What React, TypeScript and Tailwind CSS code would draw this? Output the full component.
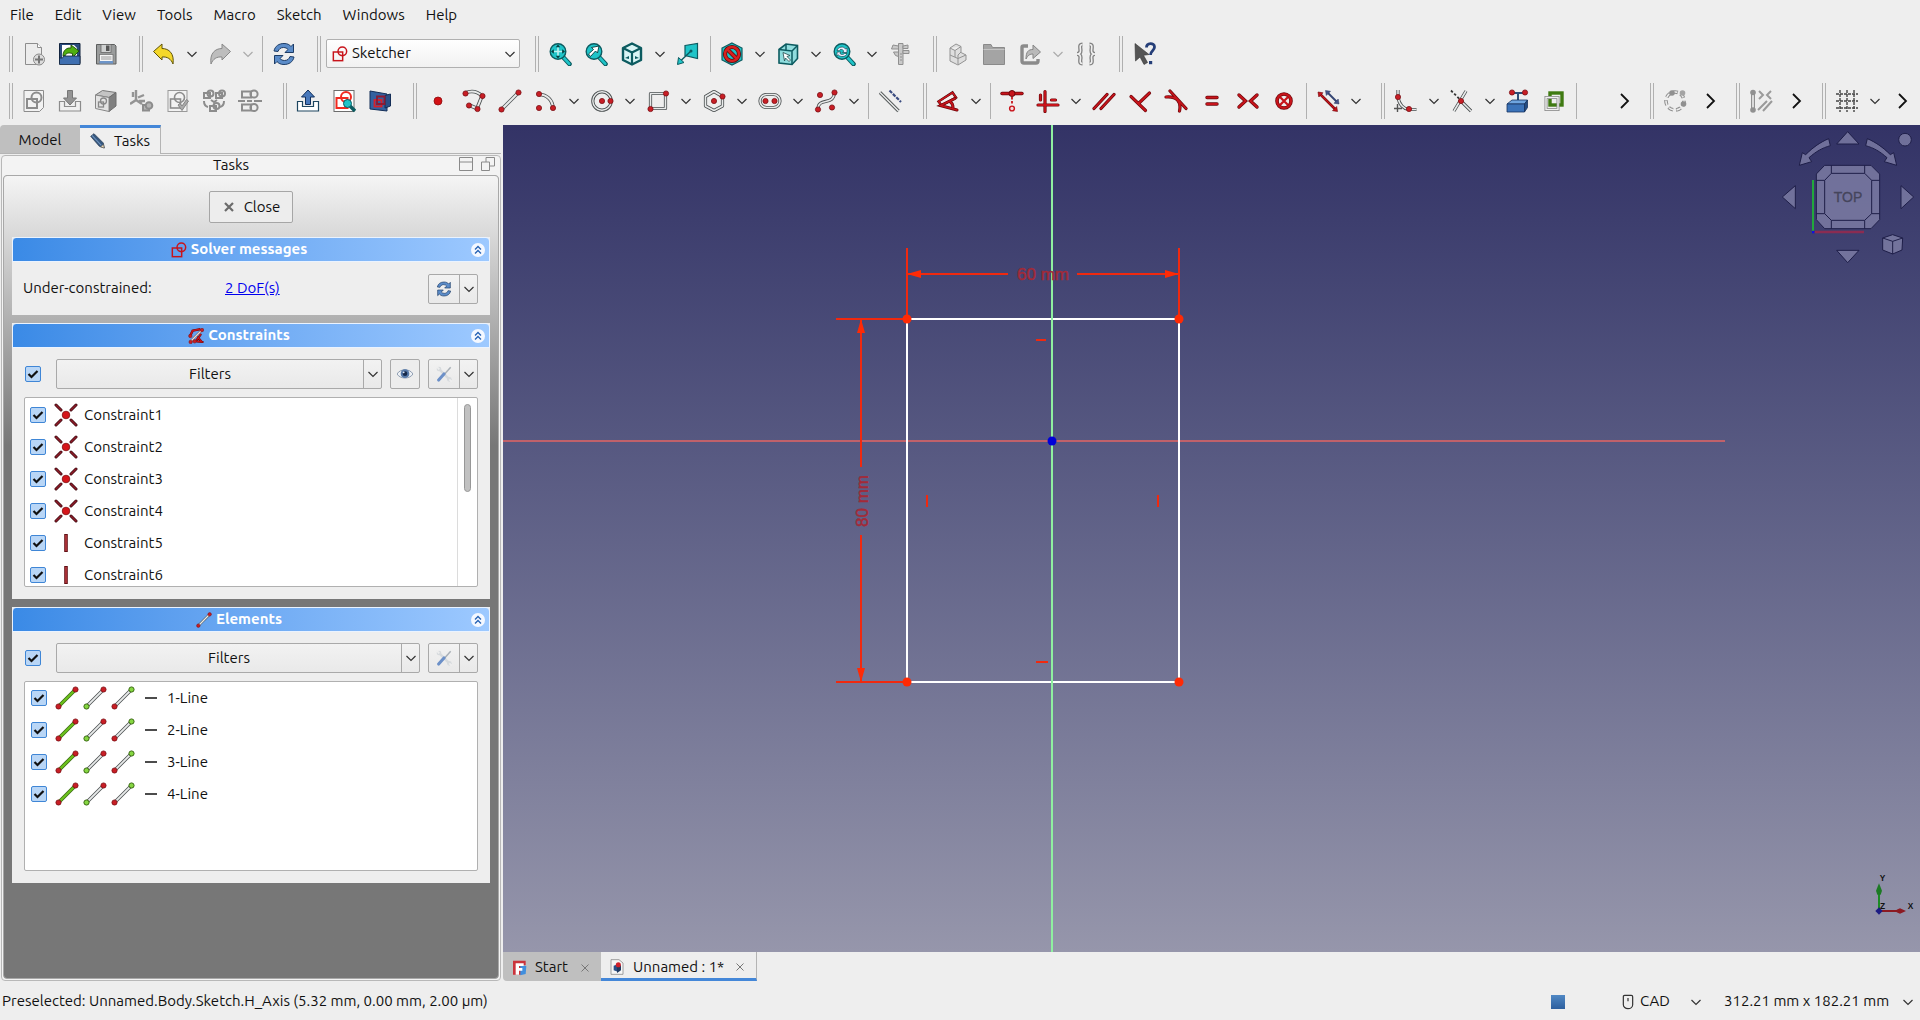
import { Fragment, useState } from 'react'
import type { ReactNode } from 'react'

const RED = '#c8141b'
const EDGE = '#3d0507'
const TEAL = '#1fc4c8'
const DTEAL = '#0c5b60'

function Tube({ d, c = '#e8eaea', o = '#4a4f50', w = 2 }: { d: string; c?: string; o?: string; w?: number }) {
  return (
    <g fill="none" strokeLinejoin="round">
      <path d={d} stroke={o} strokeWidth={w + 1.6} />
      <path d={d} stroke={c} strokeWidth={w} />
    </g>
  )
}

function Bar({ d, w = 2 }: { d: string; w?: number }) {
  return (
    <g fill="none" strokeLinecap="round">
      <path d={d} stroke="#6d070b" strokeWidth={w + 1} />
      <path d={d} stroke={RED} strokeWidth={w - 0.4} />
    </g>
  )
}

function Dot({ x, y, r = 2.6, c = '#c81e25' }: { x: number; y: number; r?: number; c?: string }) {
  return <circle cx={x} cy={y} r={r} fill={c} stroke="#7b1216" strokeWidth="0.8" />
}

function Lens({ children }: { children?: ReactNode }) {
  return (
    <>
      <path d="M15 15l6.5 7" stroke={DTEAL} strokeWidth="4.6" strokeLinecap="round" />
      <path d="M15.5 15.500l5.800 6.300" stroke={TEAL} strokeWidth="2.6" strokeLinecap="round" />
      <circle cx="10" cy="9.500" r="7.800" fill={TEAL} stroke={DTEAL} strokeWidth="1.4" />
      {children}
    </>
  )
}

const sketchShape = (
  <g fill="none" stroke={RED} strokeWidth="2.2">
    <rect x="2" y="9" width="14" height="13" />
    <circle cx="15.500" cy="8" r="6.500" />
  </g>
)

const refreshShape = (
  <g fill="#5b8cc9" stroke="#1d3c66" strokeWidth="1" strokeLinejoin="round">
    <path d="M2 9c1-5 5-7.500 10-7.500 3.500 0 5.500 1.200 7 3L21.500 2v8.500H13l3-3c-1-1.200-2.500-2-4.500-2-3 0-4.500 1.500-5.500 4z" />
    <path d="M22 15c-1 5-5 7.500-10 7.500-3.500 0-5.500-1.200-7-3L2.500 22v-8.500H11l-3 3c1 1.200 2.500 2 4.500 2 3 0 4.500-1.500 5.500-4z" />
  </g>
)

const icons: Record<string, ReactNode> = {
  newDoc: (
    <>
      <path d="M3.500 1.500h12l4 4v17h-16z" fill="#ececec" stroke="#8d8d8d" />
      <path d="M15.500 1.500v4h4" fill="#fff" stroke="#8d8d8d" />
      <circle cx="17" cy="17.500" r="5.500" fill="#dcdcdc" stroke="#8a8a8a" />
      <path d="M17 13.500v8M13 17.500h8" stroke="#777" strokeWidth="2" />
    </>
  ),
  open: (
    <>
      <path d="M1.500 1.500H22v20H1.500z" fill="#2a4b7c" stroke="#12243f" />
      <path d="M4 3h12l3 3v10H4z" fill="#fff" />
      <path d="M5 14c0-6 4-8.500 8-8l0-3 8 6-6.500 6.500v-4C10 10.500 8 11 7 14z" fill="#4fae10" stroke="#1c4d04" strokeWidth="0.9" />
      <path d="M1.500 16h3l1-2H22v8.500H1.500z" fill="#3f6fb0" stroke="#12243f" strokeWidth="0.8" />
    </>
  ),
  save: (
    <>
      <path d="M2.500 2.500h18l1.500 1.500v18h-19.500z" fill="#9a9c9c" stroke="#5c5e5e" />
      <rect x="7" y="2.500" width="10" height="8" fill="#cfd1d1" stroke="#666" strokeWidth="0.8" />
      <rect x="12" y="3.500" width="3.500" height="5.500" fill="#555" />
      <rect x="5.500" y="12.500" width="13.500" height="9" fill="#f5f5f5" stroke="#777" strokeWidth="0.8" />
      <path d="M7 15h10.500M7 17h10.500" stroke="#999" />
      <path d="M5.500 19h13.500v2.500H5.500z" fill="#6d95c9" />
    </>
  ),
  undo: <path d="M1.500 9.500L10 2v4.500c7 0 12.500 5 11 15.500-2-5-5.500-7.500-11-7V18z" fill="#f4d72a" stroke="#5f5306" strokeLinejoin="round" />,
  redo: <path d="M22.500 9.500L14 2v4.500C7 6.500 1.500 11.500 3 22c2-5 5.500-7.500 11-7V18z" fill="#bdbdbd" stroke="#888" strokeLinejoin="round" />,
  refresh: refreshShape,
  sketcher: sketchShape,
  fitAll: (
    <Lens>
      <path d="M10 2.500l2.200 2.800H7.800zM10 16.500l2.200-2.800H7.800zM3 9.500l2.800-2.200v4.400zM17 9.500l-2.800-2.200v4.400z" fill="#073b3e" />
      <path d="M10 5.500v8M6 9.500h8" stroke="#bff0f0" strokeWidth="1.600" />
    </Lens>
  ),
  fitSelection: (
    <Lens>
      <path d="M6.500 14.500L4.500 12l5-4.500-2-2L15 4l-1.500 7-2-2z" fill="#fff" stroke="#073b3e" strokeWidth="0.9" />
    </Lens>
  ),
  isometric: (
    <>
      <path d="M12 1.500l9 4.500v12l-9 4.500L3 18V6z" fill="#d9f5f5" stroke={DTEAL} strokeWidth="2.400" strokeLinejoin="round" />
      <path d="M3 6l9 4.500L21 6M12 10.500v12" fill="none" stroke={DTEAL} strokeWidth="2.200" />
      <path d="M5 16l4-2v3zM19 16l-4-2v3z" fill={DTEAL} />
    </>
  ),
  viewPlane: (
    <>
      <path d="M9 3.500l12.500-2v15L9 13.500z" fill={TEAL} stroke={DTEAL} strokeWidth="1.200" />
      <path d="M15 9L5 18.500" stroke={DTEAL} strokeWidth="1.400" />
      <path d="M1.500 22.500l1-7 5.500 5z" fill={TEAL} stroke={DTEAL} />
      <circle cx="15" cy="9" r="1.500" fill={DTEAL} />
    </>
  ),
  drawStyle: (
    <>
      <path d="M12 1l10 5v12l-10 5L2 18V6z" fill={TEAL} stroke={DTEAL} strokeWidth="1.200" />
      <circle cx="12" cy="12" r="7" fill="none" stroke="#5a0a0c" strokeWidth="4.200" />
      <path d="M7.500 7.500l9 9" stroke="#5a0a0c" strokeWidth="4.200" />
      <circle cx="12" cy="12" r="7" fill="none" stroke="#d8201f" strokeWidth="2.600" />
      <path d="M7 7l10 10" stroke="#d8201f" strokeWidth="2.600" />
    </>
  ),
  selectionBox: (
    <>
      <path d="M3 7.500L10 2l11.500 1.500v13L16 22.500 3 21z" fill="#8fdcdd" stroke={DTEAL} strokeWidth="1.600" />
      <path d="M3 7.500l13 1.500 5.500-5.500M16 9v13.500M10 2v6" fill="none" stroke={DTEAL} strokeWidth="1.500" />
      <path d="M7 10.500l7 3-3 1 3.500 3.500-1.500 1.500-3.500-3.500-1 3z" fill="#fff" stroke="#21474a" strokeWidth="0.800" />
    </>
  ),
  syncView: (
    <Lens>
      <path d="M5 8.500c1-4 7-4.500 8.500-1.500l1.500-1v4.500h-4.500l1.300-1.500C10.500 7 8 7 7 8.800zM15 11.500c-1 3.500-6.500 4-8.500 1.500L5 14v-4h4l-1 1.500c1.500 1.500 3.500 1 4.500 0z" fill="#eef" stroke="#16484b" strokeWidth="0.700" />
    </Lens>
  ),
  measure: (
    <g fill="#c9c9c9" stroke="#8f8f8f">
      <path d="M10.500 1.500h4.500v21h-4.500z" />
      <path d="M5 3l5.500 1v3H3.500zM15 4l5-1v3.500h-5zM5.500 10h5v4.500l-3-1zM15 8.500h6v3h-6z" />
      <path d="M12 12h2M12 15h2M12 18h2" />
    </g>
  ),
  part: (
    <g fill="#dedede" stroke="#929292" strokeLinejoin="round">
      <path d="M4 13l8-4 8 4v5l-8 5-8-4z" />
      <path d="M4 13V6l6-4 5 2.500v5.500l-3 3v10M4 13l8 3.500 8-3.500M4 6l5 2.500L15 4.500M9 8.500V15" />
    </g>
  ),
  folder: (
    <>
      <path d="M1.500 2.500H9l1.500 3h12v17h-21z" fill="#a4a4a4" stroke="#8a8a8a" />
      <path d="M1.500 7.500h21" stroke="#c4c4c4" />
    </>
  ),
  exportLink: (
    <>
      <path d="M10 4H5.500Q4 4 4 5.500V19q0 2 2 2h12q2 0 2-2v-2" fill="none" stroke="#8b8b8b" strokeWidth="3.400" />
      <path d="M8 17c0-7 2-9.500 7-9.500V3l7.500 7-7.500 6.500V12c-3 0-5 1-7 5z" fill="#b9b9b9" stroke="#858585" />
    </>
  ),
  varSet: (
    <g fill="none">
      <path d="M8.500 2.500C5 2.500 6.500 6 6.500 8.500S5.500 12 3 12c2.500 0 3.500 1 3.500 3.500s-1.500 6 2 6M15.500 2.500c3.500 0 2 3.500 2 6s1 3.500 3.500 3.500c-2.500 0-3.500 1-3.500 3.500s1.500 6-2 6" stroke="#828282" strokeWidth="4.200" />
      <path d="M8.500 2.500C5 2.500 6.500 6 6.500 8.500S5.500 12 3 12c2.500 0 3.500 1 3.500 3.500s-1.500 6 2 6M15.500 2.500c3.500 0 2 3.500 2 6s1 3.500 3.500 3.500c-2.500 0-3.500 1-3.500 3.500s1.500 6-2 6" stroke="#f0f0f0" strokeWidth="1.600" />
    </g>
  ),
  whatsThis: (
    <>
      <path d="M3 1.500l14 11-5.500.8 4 7.200-3.500 2-4-7.500L3.500 19z" fill="#555" stroke="#333" strokeWidth="0.600" />
      <path d="M14.500 5.500c0-5 8-5 8-.5 0 4-4 3.500-4 8" fill="none" stroke="#253e78" strokeWidth="2.800" />
      <rect x="17" y="19" width="3.200" height="3.200" fill="#253e78" />
    </>
  ),
  newSketch: (
    <>
      <path d="M2 1.500h19.500v17l-4 4H2z" fill="#f2f2f2" stroke="#8c8c8c" />
      <rect x="5" y="10" width="10" height="9" fill="none" stroke="#8c8c8c" strokeWidth="2" />
      <circle cx="14.500" cy="8.500" r="5" fill="none" stroke="#8c8c8c" strokeWidth="2" />
    </>
  ),
  attach: (
    <>
      <path d="M1.500 12.500h5v5h11v-5h5v9.500h-21z" fill="#f0f0f0" stroke="#8c8c8c" strokeWidth="1.200" />
      <path d="M9.500 1.500h5V9h4L12 16 5.500 9h4z" fill="#949494" stroke="#777" />
    </>
  ),
  box: (
    <>
      <path d="M1.500 6l7-4.500L22 3.500 15 8.500z" fill="#c4c4c4" stroke="#777" />
      <path d="M15 8.500l7-5V17l-7 5.500z" fill="#808080" stroke="#6d6d6d" />
      <path d="M1.500 6L15 8.500v14l-13.500-3z" fill="#e3e3e3" stroke="#888" />
      <rect x="4.500" y="13" width="5" height="5" fill="none" stroke="#888" strokeWidth="1.300" />
      <circle cx="9.500" cy="12" r="3" fill="none" stroke="#888" strokeWidth="1.300" />
    </>
  ),
  reorient: (
    <>
      <path d="M6 1v10L0 15M6 11l6 4M8 8.500l6-2.500M9 12l6 0M3 3v5" fill="none" stroke="#949494" strokeWidth="2.400" />
      <rect x="13" y="16" width="6" height="5.500" fill="#b5b5b5" stroke="#8c8c8c" strokeWidth="2" />
      <circle cx="19" cy="16.500" r="3.300" fill="#b5b5b5" stroke="#8c8c8c" strokeWidth="2" />
    </>
  ),
  validate: (
    <>
      <rect x="2" y="1.500" width="19" height="21" fill="#f2f2f2" stroke="#999" />
      <circle cx="13.500" cy="8.500" r="5" fill="none" stroke="#8c8c8c" strokeWidth="1.600" />
      <rect x="4.500" y="10" width="10" height="9" fill="none" stroke="#8c8c8c" strokeWidth="1.600" />
      <path d="M12 16l4 5.500L22.500 12l-2-1.500-4.500 6.500-2-2.500z" fill="#aaa" stroke="#858585" />
    </>
  ),
  merge: (
    <g fill="none" stroke="#8c8c8c" strokeWidth="2">
      <rect x="2" y="4" width="6" height="5" /><circle cx="8.500" cy="4.500" r="3" />
      <rect x="14" y="4" width="6" height="5" /><circle cx="20" cy="4.500" r="3" />
      <rect x="8" y="17" width="6" height="5" /><circle cx="14.500" cy="17" r="3" />
      <path d="M2 12q0 5 4 6M22 12q0 5-4 6M9 11l3 2 3-2" />
    </g>
  ),
  mirror: (
    <g fill="none" stroke="#8c8c8c" strokeWidth="2">
      <path d="M0 12h7M9 12h5M16 12h8" />
      <rect x="4" y="2.500" width="9" height="6" /><circle cx="16" cy="5" r="3.600" />
      <rect x="4" y="15.500" width="9" height="6" /><circle cx="16" cy="18.500" r="3.600" />
    </g>
  ),
  leave: (
    <>
      <path d="M1.500 12.500h5v5h11v-5h5v9.500h-21z" fill="#fff" stroke="#1e4660" strokeWidth="1.200" />
      <path d="M9.500 15.500h5V8h4L12 1 5.500 8h4z" fill="#4878bb" stroke="#12305c" />
    </>
  ),
  viewSketch: (
    <>
      <rect x="2" y="1.500" width="20" height="21" fill="#fff" stroke="#6c6c6c" />
      <g fill="none" stroke="#f02a20" strokeWidth="2"><circle cx="14" cy="8" r="5" /><rect x="4.500" y="9" width="11" height="10" /></g>
      <path d="M18 17l5 5" stroke="#0c5b60" strokeWidth="3.600" />
      <circle cx="15.500" cy="14.500" r="4" fill={TEAL} stroke={DTEAL} />
    </>
  ),
  viewSection: (
    <>
      <path d="M2 2l17 3v17L2 20z" fill="#34619f" stroke="#142e57" />
      <path d="M17 6.500l5.500-1.500v12L17 19z" fill="#2a4f86" stroke="#142e57" />
      <rect x="6.500" y="11" width="7" height="6.500" fill="none" stroke="#d8202a" strokeWidth="1.800" />
      <path d="M9 7.500h7.500v7.500H9z" fill="none" stroke="#8d1a33" strokeWidth="1.800" />
    </>
  ),
  point: <circle cx="12" cy="12" r="4" fill="#d31014" stroke="#8d0c0f" strokeWidth="0.800" />,
  polyline: (
    <>
      <Tube d="M3 4c6-2.500 12-2 17 3l-5 12.500-8-3.500" />
      <Dot x={3.500} y={4.500} /><Dot x={20.500} y={7} /><Dot x={15.500} y={20} /><Dot x={7} y={16.500} />
    </>
  ),
  line: <><Tube d="M3.500 20.500L20.500 3.500" /><Dot x={3.500} y={20.500} /><Dot x={20.500} y={3.500} /></>,
  arc: <><Tube d="M5 5.500C13 5.500 18.500 11 19 19" /><Dot x={5} y={5} /><Dot x={5} y={19} /><Dot x={19} y={19} /></>,
  circle: (
    <>
      <circle cx="12" cy="12" r="9.200" fill="none" stroke="#4a4f50" strokeWidth="3.200" />
      <circle cx="12" cy="12" r="9.200" fill="none" stroke="#e8eaea" strokeWidth="1.400" />
      <Dot x={12} y={12} /><Dot x={20.500} y={12} />
    </>
  ),
  rect: <><Tube d="M4.500 4.500h15v15h-15z" w={1.600} /><Dot x={20} y={4.500} /><Dot x={4.500} y={20} /></>,
  hexagon: <><Tube d="M12 2.500l8.500 5v9.500L12 21.500 3.500 17V7.500z" w={1.600} /><Dot x={12} y={12} /><Dot x={20.500} y={7.500} /></>,
  slot: <><Tube d="M8.500 5.500h7a6.500 6.500 0 0 1 0 13h-7a6.500 6.500 0 0 1 0-13z" w={1.600} /><Dot x={7.500} y={12} /><Dot x={16.500} y={12} /></>,
  spline: <><Tube d="M4 20C4 8 19.500 17 20.500 4" w={1.600} /><Dot x={4} y={20.500} /><Dot x={20.500} y={3.500} /><Dot x={6} y={6} /><Dot x={18} y={18.500} /></>,
  construction: (
    <>
      <Tube d="M2 3.500l18.500 18.500" w={1.600} />
      <path d="M11.500 1.500l11.500 11.500" stroke="#3a4c80" strokeWidth="2.200" strokeDasharray="3.600 1.200" />
    </>
  ),
  dimension: (
    <>
      <path d="M2.500 12.500L16.500 3.500l3.500 5L5.500 16.500z" fill="#f6eeee" stroke={EDGE} strokeWidth="2.400" />
      <path d="M2.500 12.500L16.500 3.500l3.500 5L5.500 16.500z" fill="none" stroke={RED} strokeWidth="1.600" />
      <Bar d="M21 21L4.500 16.500 19 9.500M14.500 13c2 1.500 2.500 3 2.500 5.500" w={2} />
    </>
  ),
  coincident: (
    <>
      <Bar d="M2 4.500h20" w={2.400} />
      <circle cx="12" cy="4.500" r="3" fill={RED} stroke="#6d070b" />
      <path d="M12 8v8" stroke={RED} strokeWidth="1.800" strokeDasharray="2.500 1.500" />
      <circle cx="12" cy="19.500" r="2.400" fill="#f5dcdc" stroke={RED} strokeWidth="1.400" />
    </>
  ),
  horVert: <Bar d="M2 16h20M9 2.500v20M4.500 6v5M15.500 11h4" w={2.200} />,
  parallel: <Bar d="M2 19.500L15 5.500M9 19.500L22 5.500" w={2.200} />,
  perpendicular: <Bar d="M21.500 4L10.500 14.500M3 7.500l14.500 14" w={2.200} />,
  tangent: <Bar d="M6 2l16 17.500M2 8c11-1 15.500 5 13.500 14" w={2.200} />,
  equal: <Bar d="M7 8.500h10M7 15h10" w={2.400} />,
  symmetric: <Bar d="M3 6l6.500 6L3 18M21 6l-6.500 6 6.500 6" w={2.400} />,
  block: (
    <>
      <circle cx="12" cy="12" r="7" fill="none" stroke="#6d070b" strokeWidth="3.600" />
      <circle cx="12" cy="12" r="7" fill="none" stroke={RED} strokeWidth="2.200" />
      <path d="M8 8l8 8M16 8l-8 8" stroke={RED} strokeWidth="2.200" />
    </>
  ),
  toggleDriving: (
    <>
      <Bar d="M4 5l15.500 15.500" w={1.600} />
      <path d="M2 3l5 .8-4.200 4.200zM21.500 22.500l-5-.8 4.200-4.200z" fill={RED} stroke="#6d070b" strokeWidth="0.600" />
      <path d="M11.500 3.500l9.500 9.500" stroke="#354573" strokeWidth="2" />
      <path d="M9.500 1.500l5 .8-4.200 4.200zM23 15l-5-.8 4.200-4.200z" fill="#46568a" stroke="#2a375f" strokeWidth="0.500" />
    </>
  ),
  fillet: (
    <>
      <Tube d="M4 1v7c1 8 6 12 11 12.500h7.500" w={1.600} />
      <path d="M3.500 15v8M0 19.500h8" stroke="#555" strokeWidth="1.400" />
      <Dot x={4} y={8} /><Dot x={15} y={20} />
    </>
  ),
  trim: (
    <>
      <Tube d="M16 2L4 22M11 12l10 10" w={1.600} />
      <path d="M1 1.500l9 9" stroke="#333" strokeWidth="1.800" strokeDasharray="2.500 2" />
      <Dot x={11} y={12} />
    </>
  ),
  external: (
    <>
      <path d="M5 4h14" stroke="#2d4e77" strokeWidth="2" />
      <path d="M12 4v8" stroke="#2d4e77" strokeWidth="2" />
      <path d="M1 15l5-4h15.500l-3 4z" fill="#6fa6e0" stroke="#16345f" strokeWidth="0.800" />
      <path d="M1 15h17.500v8H1z" fill="#3b73b9" stroke="#16345f" strokeWidth="0.800" />
      <path d="M18.500 15l3-4v7.500l-3 4.500z" fill="#234c82" stroke="#16345f" strokeWidth="0.800" />
      <Dot x={6} y={3.500} /><Dot x={19} y={3.500} />
    </>
  ),
  carbonCopy: (
    <>
      <rect x="8" y="4" width="12" height="12" fill="none" stroke="#3f7a12" strokeWidth="3.400" />
      <rect x="4" y="8.500" width="12" height="12" fill="none" stroke="#888" strokeWidth="3" />
      <rect x="4" y="8.500" width="12" height="12" fill="none" stroke="#f0f0f0" strokeWidth="1.400" />
    </>
  ),
  bspline: (
    <>
      <circle cx="12" cy="12" r="9" fill="none" stroke="#8c8c8c" strokeWidth="3.600" strokeDasharray="5 3" />
      <circle cx="12" cy="12" r="9" fill="none" stroke="#eee" strokeWidth="1.600" strokeDasharray="4.500 3.500" />
      <circle cx="9" cy="4" r="2.800" fill="#909090" /><circle cx="19.500" cy="4" r="2.800" fill="#a4a4a4" /><circle cx="20.500" cy="15" r="2.800" fill="#909090" />
    </>
  ),
  visual: (
    <>
      <path d="M4 4v17" stroke="#909090" strokeWidth="4" /><path d="M4 4v17" stroke="#eee" strokeWidth="1.600" />
      <circle cx="4" cy="3.500" r="2.800" fill="#909090" /><circle cx="4" cy="21" r="2.800" fill="#909090" />
      <path d="M10 2l4 4-4 4M22 2l-4 4 4 4M9 21l9-9M14 22l9-10" fill="none" stroke="#9a9a9a" strokeWidth="2" />
    </>
  ),
  grid: <path d="M1 5h22M1 12h22M1 19h22M5 1v22M12 1v22M19 1v22" stroke="#444" strokeWidth="1.400" strokeDasharray="3 1" />,
  constraints: (
    <>
      <Bar d="M7 4L17 2M4 10l3-6" w={2.600} />
      <Tube d="M3 21L21 3" c="#f3d5d5" />
      <Bar d="M13 20l9 1M19 10l-6 8M15 14l5 6" w={2.200} />
      <Dot x={4} y={21} /><Dot x={21} y={3} /><Dot x={3.500} y={12} /><Dot x={10} y={20} />
    </>
  ),
  coincidentPoint: (
    <>
      <path d="M2 2l5 5M22 2l-5 5M2 22l5-5M22 22l-5-5" stroke="#3c0a10" strokeWidth="3" strokeLinecap="round" />
      <path d="M2 2l5 5M22 2l-5 5M2 22l5-5M22 22l-5-5" stroke="#8e1c28" strokeWidth="1.600" strokeLinecap="round" />
      <circle cx="12" cy="12" r="3.800" fill="#d5151a" stroke="#7d1013" strokeWidth="0.800" />
    </>
  ),
  vertical: (
    <>
      <path d="M12 3v18" stroke="#611015" strokeWidth="3.600" />
      <path d="M12 4v16" stroke="#b0353a" strokeWidth="1.800" />
    </>
  ),
  edge: <><Tube d="M3.500 20.500L20.500 3.500" c="#6cc31c" o="#3c6a14" w={2.200} /><Dot x={3.500} y={20.500} /><Dot x={20.500} y={3.500} /></>,
  startPoint: <><Tube d="M3.500 20.500L20.500 3.500" w={1.800} /><circle cx="3.500" cy="20.500" r="2.600" fill="#85d641" stroke="#3c6a14" /><Dot x={20.500} y={3.500} /></>,
  endPoint: <><Tube d="M3.500 20.500L20.500 3.500" w={1.800} /><Dot x={3.500} y={20.500} /><circle cx="20.500" cy="3.500" r="2.600" fill="#85d641" stroke="#3c6a14" /></>,
  eye: (
    <>
      <path d="M0 12C5 3.500 19 3.500 24 12 19 20 5 20 0 12z" fill="#eef1f5" stroke="#8494ab" strokeWidth="1.400" />
      <circle cx="12" cy="11.500" r="6.500" fill="#5578a8" /><circle cx="12" cy="11.500" r="3.500" fill="#16294a" /><circle cx="10" cy="9.500" r="1.400" fill="#dfe8f5" />
    </>
  ),
  tools: (
    <>
      <path d="M4 4l16 16" stroke="#d6dadd" strokeWidth="3.600" />
      <circle cx="4.500" cy="4.500" r="3.500" fill="#d6dadd" /><circle cx="20" cy="20" r="3.500" fill="#d6dadd" /><path d="M1 1l4 4M20 20l4 4" stroke="#eee" strokeWidth="2.600" />
      <path d="M22 2l-9 10" stroke="#a9b0b7" strokeWidth="2.200" />
      <path d="M12 12l-8 9" stroke="#6c90c8" strokeWidth="4.600" strokeLinecap="round" />
    </>
  ),
  pencil: (
    <>
      <path d="M1 5l5-4 14 14 1.500 7.500L14 20z" fill="#35577f" stroke="#1d3149" />
      <path d="M16 21l5.500 1.500L20 17z" fill="#ecd9b5" stroke="#333" strokeWidth="0.600" />
      <path d="M3 3.500l14 15" stroke="#6f93bd" strokeWidth="1.600" />
    </>
  ),
  freecad: (
    <>
      <path d="M3 1h19v7h-7v14H3z" fill="#cb333b" />
      <path d="M14 8l9 1-1 12-8 2z" fill="#418fde" />
      <path d="M7 5h12v4h-7v3h5v4h-5v6H7z" fill="#fff" />
    </>
  ),
  document: (
    <>
      <path d="M3 1h12l6 5v17H3z" fill="#f6f6f6" stroke="#777" />
      <path d="M7 10l6-2v11l-6-2z" fill="#294e86" /><path d="M12 12l6-3v8l-6 4z" fill="#20395f" /><circle cx="14" cy="8.500" r="3.800" fill="#d0202a" />
    </>
  ),
  mouse: <path d="M7 2h10q2 0 2 2v12a7 6 0 0 1-14 0V4q0-2 2-2zM12 6v5" fill="none" stroke="#333" strokeWidth="1.800" />,
}

function Icon({ name, size = 'size-6' }: { name: string; size?: string }) {
  return (
    <svg viewBox="0 0 24 24" fill="none" className={`${size} shrink-0`} aria-hidden="true">
      {icons[name]}
    </svg>
  )
}

function Chevron({ dim }: { dim?: boolean }) {
  return (
    <svg viewBox="0 0 12 12" className={`size-3 shrink-0 ${dim ? 'text-[#aaa]' : 'text-[#333]'}`} fill="none" aria-hidden="true">
      <path d="M1.500 4L6 8.500 10.500 4" stroke="currentColor" strokeWidth="1.200" />
    </svg>
  )
}

interface Tool {
  icon: string
  label: string
  menu?: boolean
  off?: boolean
}
type Item = Tool | 'sep' | 'handle' | 'ext' | 'fill'

const fileTools: Item[] = [
  'handle',
  { icon: 'newDoc', label: 'New' },
  { icon: 'open', label: 'Open' },
  { icon: 'save', label: 'Save' },
  'handle',
  { icon: 'undo', label: 'Undo', menu: true },
  { icon: 'redo', label: 'Redo', menu: true, off: true },
  'sep',
  { icon: 'refresh', label: 'Refresh' },
  'handle',
]

const viewTools: Item[] = [
  'handle',
  { icon: 'fitAll', label: 'Fit all' },
  { icon: 'fitSelection', label: 'Fit selection' },
  { icon: 'isometric', label: 'Isometric', menu: true },
  { icon: 'viewPlane', label: 'Align to selection' },
  'sep',
  { icon: 'drawStyle', label: 'Draw style', menu: true },
  { icon: 'selectionBox', label: 'Selection view', menu: true },
  { icon: 'syncView', label: 'Sync view', menu: true },
  { icon: 'measure', label: 'Measure', off: true },
  'handle',
  { icon: 'part', label: 'Create part', off: true },
  { icon: 'folder', label: 'Create group', off: true },
  { icon: 'exportLink', label: 'Make link', menu: true, off: true },
  { icon: 'varSet', label: 'Variable set', off: true },
  'handle',
  { icon: 'whatsThis', label: 'What is this?' },
]

const sketchTools: Item[] = [
  'handle',
  { icon: 'newSketch', label: 'New sketch', off: true },
  { icon: 'attach', label: 'Attach sketch', off: true },
  { icon: 'box', label: 'Edit sketch', off: true },
  { icon: 'reorient', label: 'Reorient sketch', off: true },
  { icon: 'validate', label: 'Validate sketch', off: true },
  { icon: 'merge', label: 'Merge sketches', off: true },
  { icon: 'mirror', label: 'Mirror sketch', off: true },
  'handle',
  { icon: 'leave', label: 'Leave sketch' },
  { icon: 'viewSketch', label: 'View sketch' },
  { icon: 'viewSection', label: 'View section' },
  'handle',
  { icon: 'point', label: 'Point' },
  { icon: 'polyline', label: 'Polyline' },
  { icon: 'line', label: 'Line' },
  { icon: 'arc', label: 'Arc', menu: true },
  { icon: 'circle', label: 'Circle', menu: true },
  { icon: 'rect', label: 'Rectangle', menu: true },
  { icon: 'hexagon', label: 'Polygon', menu: true },
  { icon: 'slot', label: 'Slot', menu: true },
  { icon: 'spline', label: 'B-spline', menu: true },
  'sep',
  { icon: 'construction', label: 'Construction geometry' },
  'handle',
  { icon: 'dimension', label: 'Dimension', menu: true },
  'sep',
  { icon: 'coincident', label: 'Coincident' },
  { icon: 'horVert', label: 'Horizontal/vertical', menu: true },
  { icon: 'parallel', label: 'Parallel' },
  { icon: 'perpendicular', label: 'Perpendicular' },
  { icon: 'tangent', label: 'Tangent' },
  { icon: 'equal', label: 'Equal' },
  { icon: 'symmetric', label: 'Symmetric' },
  { icon: 'block', label: 'Block' },
  'sep',
  { icon: 'toggleDriving', label: 'Toggle driving', menu: true },
  'handle',
  { icon: 'fillet', label: 'Fillet', menu: true },
  { icon: 'trim', label: 'Trim', menu: true },
  { icon: 'external', label: 'External geometry' },
  { icon: 'carbonCopy', label: 'Carbon copy' },
  'sep',
  'fill',
  'ext',
  'handle',
  { icon: 'bspline', label: 'B-spline tools', off: true },
  'ext',
  'handle',
  { icon: 'visual', label: 'Visual helpers', off: true },
  'ext',
  'handle',
  { icon: 'grid', label: 'Grid', menu: true },
  'ext',
]

function ToolItems({ items }: { items: Item[] }) {
  return (
    <>
      {items.map((item, i) => {
        if (item === 'handle') {
          return <span key={i} className="h-9 w-1 shrink-0 border-x border-[#b0b0b0] mr-[3px] ml-[15px] first:ml-[9px]" />
        }
        if (item === 'sep') {
          return <span key={i} className="h-9 w-px shrink-0 bg-[#b0b0b0] mr-[3px] ml-1" />
        }
        if (item === 'fill') return <span key={i} className="flex-1" />
        if (item === 'ext') {
          return (
            <button key={i} aria-label="More tools" className="flex w-7 shrink-0 items-center justify-end pr-1">
              <svg viewBox="0 0 12 18" className="h-[18px] w-3" fill="none">
                <path d="M2 2l7 7-7 7" stroke="#111" strokeWidth="1.800" />
              </svg>
            </button>
          )
        }
        return (
          <Fragment key={i}>
            <button aria-label={item.label} disabled={item.off} className="flex h-9 w-9 shrink-0 items-center justify-center">
              <Icon name={item.icon} />
            </button>
            {item.menu && (
              <button aria-label={`${item.label} options`} disabled={item.off} className="flex h-9 w-5 shrink-0 items-center justify-center">
                <Chevron dim={item.off} />
              </button>
            )}
          </Fragment>
        )
      })}
    </>
  )
}

function Check({ label, children }: { label?: string; children?: ReactNode }) {
  return (
    <label className="flex items-center">
      <span className="relative flex size-4">
        <input
          type="checkbox"
          defaultChecked
          aria-label={label}
          className="peer size-4 appearance-none rounded-xs border border-[#3f86d6] bg-[#b9d6f6]"
        />
        <svg viewBox="0 0 16 16" className="pointer-events-none absolute inset-0 size-4 opacity-0 peer-checked:opacity-100" fill="none">
          <path d="M3.500 8l3 3 6-6" stroke="#111" strokeWidth="2.200" />
        </svg>
      </span>
      {children}
    </label>
  )
}

function SplitButton({ label, icon, text, grow }: { label: string; icon?: string; text?: string; grow?: boolean }) {
  return (
    <div className={`flex h-[30px] rounded-xs border border-[#a9a9a9] bg-linear-to-b from-[#f2f2f2] to-[#e9e9e9] ${grow ? 'flex-1' : 'w-[50px]'}`}>
      <button aria-label={label} className="flex flex-1 items-center justify-center border-r border-[#a9a9a9]">
        {icon ? <Icon name={icon} size="size-4" /> : text}
      </button>
      <button aria-label={`${label} menu`} className="flex w-[17px] items-center justify-center">
        <Chevron />
      </button>
    </div>
  )
}

function Panel({ icon, title, children }: { icon: string; title: string; children: ReactNode }) {
  const [open, setOpen] = useState(true)
  return (
    <section className="bg-[#eeeeee]">
      <header className="flex h-[25px] items-center rounded-t-sm border border-[#eaf3ff] bg-linear-to-r from-[#3a8ae6] to-[#9dc9ff] px-1">
        <h2 className="flex flex-1 items-center justify-center gap-1 pr-2.5 font-bold text-white">
          <Icon name={icon} size="size-4" />
          {title}
        </h2>
        <button aria-label={`Toggle ${title}`} onClick={() => setOpen(!open)}>
          <svg viewBox="0 0 14 14" className="size-[14px]" fill="none">
            <circle cx="7" cy="7" r="7" fill="#f4f8ff" />
            <path d="M4 6.500l3-3 3 3M4 10.500l3-3 3 3" stroke="#2462b4" strokeWidth="1.300" />
          </svg>
        </button>
      </header>
      {open && children}
    </section>
  )
}

const constraints = [
  { name: 'Constraint1', icon: 'coincidentPoint' },
  { name: 'Constraint2', icon: 'coincidentPoint' },
  { name: 'Constraint3', icon: 'coincidentPoint' },
  { name: 'Constraint4', icon: 'coincidentPoint' },
  { name: 'Constraint5', icon: 'vertical' },
  { name: 'Constraint6', icon: 'vertical' },
]

function TasksPanel() {
  return (
    <aside className="flex w-[503px] shrink-0 flex-col pr-0.5">
      <div className="flex h-[29px] border-b border-[#b4b4b4]">
        <button className="w-20 rounded-tl-sm bg-[#bfbfbf] pt-[3px]">Model</button>
        <button className="-mb-px flex w-[81px] items-center justify-center gap-2 border-t-3 border-r border-t-[#4487d8] border-r-[#b4b4b4] bg-[#efefef]">
          <Icon name="pencil" size="size-4" />
          Tasks
        </button>
      </div>
      <div className="mt-px ml-px flex flex-1 flex-col rounded-sm border border-[#b8b8b8] bg-[#f3f3f3] p-px">
        <div className="flex h-[18px] items-start pr-1">
          <h1 className="flex-1 text-center leading-4">Tasks</h1>
          <button aria-label="Collapse panel" className="mr-2">
            <svg viewBox="0 0 14 14" className="size-[14px]" fill="none" stroke="#8a8a8a"><path d="M.5.5h13v13H.5zM.5 5h13" /></svg>
          </button>
          <button aria-label="Float panel">
            <svg viewBox="0 0 14 14" className="size-[14px]" fill="none" stroke="#8a8a8a"><path d="M.5 5h8v8.500h-8zM5 5V.5h8.500V9H8.500" /></svg>
          </button>
        </div>
        <div className="flex flex-1 flex-col gap-2 rounded-sm border border-[#a8a8a8] bg-[#777777] bg-linear-to-b from-[#f5f5f5] to-[#777777] to-[270px] px-2">
          <button className="mx-auto mt-[15px] mb-1.5 flex h-8 items-center gap-2 rounded-xs border border-[#a6a6a6] bg-[#ededed] px-3">
            <svg viewBox="0 0 10 10" className="mx-0.5 size-2.5"><path d="M1 1l8 8M9 1L1 9" stroke="#6b6b6b" strokeWidth="2.200" /></svg>
            Close
          </button>

          <Panel icon="sketcher" title="Solver messages">
            <div className="flex h-[53px] items-center pr-3 pl-[11px]">
              <span className="w-[202px]">Under-constrained:</span>
              <a href="#dof" className="flex-1 text-[#0000ee] underline">2 DoF(s)</a>
              <SplitButton label="Update" icon="refresh" />
            </div>
          </Panel>

          <Panel icon="constraints" title="Constraints">
            <div className="flex flex-col gap-2 p-3 pt-[11px]">
              <div className="flex items-center gap-2">
                <div className="w-6 pl-px">
                  <Check label="Show all constraints" />
                </div>
                <SplitButton label="Filters" text="Filters" grow />
                <button aria-label="Visibility" className="flex size-[30px] items-center justify-center rounded-xs border border-[#a9a9a9] bg-[#ededed]">
                  <Icon name="eye" size="size-4" />
                </button>
                <SplitButton label="Settings" icon="tools" />
              </div>
              <div className="flex h-[190px] overflow-hidden rounded-xs border border-[#b0b0b0] bg-white">
                <ul className="flex-1 pt-px pl-[5px]">
                  {constraints.map(c => (
                    <li key={c.name} className="flex h-8 items-center">
                      <Check>
                        <span className="mr-1.5 ml-2 flex">
                          <Icon name={c.icon} />
                        </span>
                        {c.name}
                      </Check>
                    </li>
                  ))}
                </ul>
                <div className="w-5 border-l border-[#dcdcdc] px-1.5 py-1.5">
                  <div className="h-[88px] rounded-full border border-[#979797] bg-[#c1c1c1]" />
                </div>
              </div>
            </div>
          </Panel>

          <Panel icon="line" title="Elements">
            <div className="flex flex-col gap-2 p-3 pt-[11px]">
              <div className="flex items-center gap-2">
                <div className="w-6 pl-px">
                  <Check label="Show all elements" />
                </div>
                <SplitButton label="Filters" text="Filters" grow />
                <SplitButton label="Settings" icon="tools" />
              </div>
              <ul className="h-[190px] rounded-xs border border-[#b0b0b0] bg-white pl-1.5">
                {[1, 2, 3, 4].map(n => (
                  <li key={n} className="flex h-8 items-center">
                    <Check>
                      <span className="ml-2 flex gap-1">
                        <Icon name="edge" />
                        <Icon name="startPoint" />
                        <Icon name="endPoint" />
                      </span>
                      <span className="mx-2.5 h-0.5 w-3 bg-[#4c4c4c]" />
                      {n}-Line
                    </Check>
                  </li>
                ))}
              </ul>
            </div>
          </Panel>
        </div>
      </div>
    </aside>
  )
}

function NavCube() {
  return (
    <svg viewBox="0 15 540 435" className="absolute top-0 right-0 h-[145px] w-[180px]" stroke="#1e1e48" strokeWidth="3">
      <g fill="#8484ab" fillOpacity="0.75">
        <path d="M323 35l34 37h-67zM323 428l34-37h-67zM127 231l39-34v69zM521 231l-38-34v69z" />
        <path d="M266 56l5 21c-25 7-42 17-64 36l8 12-37 11 9-38 10 6c22-22 45-38 69-48zM382 56l-5 21c25 7 42 17 64 36l-8 12 37 11-9-38-10 6c-22-22-45-38-69-48z" />
        <circle cx="495" cy="59" r="19" />
        <path d="M254 136h139l26 26v137l-26 27H254l-25-27V162z" />
        <path d="M458 344l30 10-2 36-28 12-30-12V354z" />
      </g>
      <g fill="none">
        <path d="M274 136v24h100v-24M229 181h25v100h-25M419 181h-24v100h24M274 326v-25h100v25M274 160l-20 21M374 160l21 21M254 281l20 20M395 281l-21 20" />
        <path d="M428 354l30 10 30-10M458 364v38" />
      </g>
      <path d="M219 180v152" stroke="#22a83c" strokeWidth="6" />
      <path d="M224 336h148" stroke="#8b2c52" strokeWidth="8" />
      <rect x="216" y="333" width="7" height="7" fill="#1010e0" stroke="none" />
      <text x="324" y="246" textAnchor="middle" fontSize="42" fill="#45455c" stroke="#45455c" strokeWidth="1" fontFamily="Liberation Sans, sans-serif">TOP</text>
    </svg>
  )
}

function Viewport() {
  return (
    <div className="relative flex-1 overflow-hidden bg-linear-to-b from-[#333366] to-[#9696ab]">
      <svg className="absolute inset-0 size-full" fill="none">
        <path d="M0 316h1222" stroke="#c0616a" strokeWidth="2" />
        <path d="M404 194h272v363H404z" stroke="#fff" strokeWidth="2" />
        <path d="M549 0v1000" stroke="#8ff0a0" strokeWidth="2" />
        <g stroke="#f0290f" strokeWidth="2">
          <path d="M404 123v71M676 123v71M404 149h101M574 149h102M333 194h71M333 557h71M358 194v148M358 410v147" />
          <path d="M533 215h10M533 537h12M424 370v12M655 370v12" />
        </g>
        <g fill="#ff2a05">
          <path d="M404 149l14-4v8zM676 149l-14-4v8zM358 194l-4 14h8zM358 557l-4-14h8z" />
          <circle cx="404" cy="194" r="4.500" /><circle cx="676" cy="194" r="4.500" />
          <circle cx="404" cy="557" r="4.500" /><circle cx="676" cy="557" r="4.500" />
        </g>
        <circle cx="549" cy="316" r="4.500" fill="#0000d8" />
        <g fill="#a22a38" fontSize="17" textAnchor="middle" fontFamily="Liberation Sans, sans-serif" stroke="#a22a38" strokeWidth="0.500">
          <text x="540" y="155">60 mm</text>
          <text x="365" y="376" transform="rotate(-90 365 376)">80 mm</text>
        </g>
      </svg>
      <NavCube />
      <svg viewBox="1080 30 180 246" className="absolute right-0 bottom-0 h-[82px] w-[60px]">
        <path d="M1137 153V100" stroke="#1c8a24" strokeWidth="6" />
        <path d="M1137 70l9 22-4 12h-10l-4-12z" fill="#1c7a24" />
        <path d="M1137 153h60" stroke="#8c1a22" strokeWidth="6" />
        <path d="M1218 153l-18 8-10-4v-8l10-4z" fill="#8c1a22" />
        <path d="M1137 142l11 11-11 11-11-11z" fill="#1c1c84" />
        <g fontSize="25" fontWeight="bold" fill="#111" fontFamily="Liberation Sans, sans-serif">
          <text x="1139" y="64">Y</text><text x="1140" y="148">Z</text><text x="1223" y="148">X</text>
        </g>
      </svg>
    </div>
  )
}

function CloseTab({ name }: { name: string }) {
  return (
    <button aria-label={`Close ${name}`}>
      <svg viewBox="0 0 8 8" className="size-2"><path d="M.5.5l7 7M7.500.5l-7 7" stroke="#777" /></svg>
    </button>
  )
}

export default function App() {
  return (
    <div className="flex h-screen flex-col overflow-hidden bg-[#eeeeee] font-['Ubuntu','Noto_Sans',sans-serif] text-[15px] text-[#111]">
      <nav className="flex h-[30px] items-center gap-[21px] px-2.5">
        {['File', 'Edit', 'View', 'Tools', 'Macro', 'Sketch', 'Windows', 'Help'].map(m => (
          <button key={m}>{m}</button>
        ))}
      </nav>
      <div className="flex h-[47px] items-center">
        <ToolItems items={fileTools} />
        <div className="relative mr-1.5 ml-0.5 flex w-[194px] items-center">
          <span className="pointer-events-none absolute left-1.5">
            <Icon name="sketcher" size="size-4" />
          </span>
          <select aria-label="Workbench" className="h-[29px] w-full appearance-none rounded-xs border border-[#b0b0b0] bg-linear-to-b from-white to-[#f1f1f1] pl-[25px]">
            <option>Sketcher</option>
          </select>
          <span className="pointer-events-none absolute right-1">
            <Chevron />
          </span>
        </div>
        <div className="flex items-center">
          <ToolItems items={viewTools} />
        </div>
      </div>
      <div className="flex h-12 items-center pr-[7px]">
        <ToolItems items={sketchTools} />
      </div>

      <div className="flex min-h-0 flex-1">
        <TasksPanel />
        <main className="flex flex-1 flex-col">
          <Viewport />
          <div className="flex h-[29px]">
            <div className="flex w-[98px] items-center gap-2 rounded-bl-sm bg-[#bfbfbf] pt-0.5 pr-3 pl-2">
              <Icon name="freecad" size="size-4" />
              <button className="flex-1 text-left">Start</button>
              <CloseTab name="Start" />
            </div>
            <div className="flex w-[156px] items-center gap-2 border-r border-b-3 border-r-[#b4b4b4] border-b-[#4487d8] pt-1 pr-3 pl-2">
              <Icon name="document" size="size-4" />
              <button className="flex-1 text-left whitespace-nowrap">Unnamed : 1*</button>
              <CloseTab name="Unnamed" />
            </div>
          </div>
        </main>
      </div>

      <footer className="flex h-[39px] items-center px-0.5 pt-0.5">
        <p className="flex-1">Preselected: Unnamed.Body.Sketch.H_Axis (5.32 mm, 0.00 mm, 2.00 µm)</p>
        <button aria-label="Notifications" className="mr-[55px] size-[14px] bg-linear-to-b from-[#5088c4] to-[#2d5f9e]" />
        <div className="relative mr-[22px] flex w-[82px] items-center">
          <span className="pointer-events-none absolute left-0">
            <Icon name="mouse" size="size-4" />
          </span>
          <select aria-label="Navigation style" className="w-full appearance-none pl-5">
            <option>CAD</option>
          </select>
          <span className="pointer-events-none absolute right-0">
            <Chevron />
          </span>
        </div>
        <div className="relative mr-1 flex w-[190px] items-center">
          <select aria-label="View size" className="w-full appearance-none">
            <option>312.21 mm x 182.21 mm</option>
          </select>
          <span className="pointer-events-none absolute right-0">
            <Chevron />
          </span>
        </div>
      </footer>
    </div>
  )
}
